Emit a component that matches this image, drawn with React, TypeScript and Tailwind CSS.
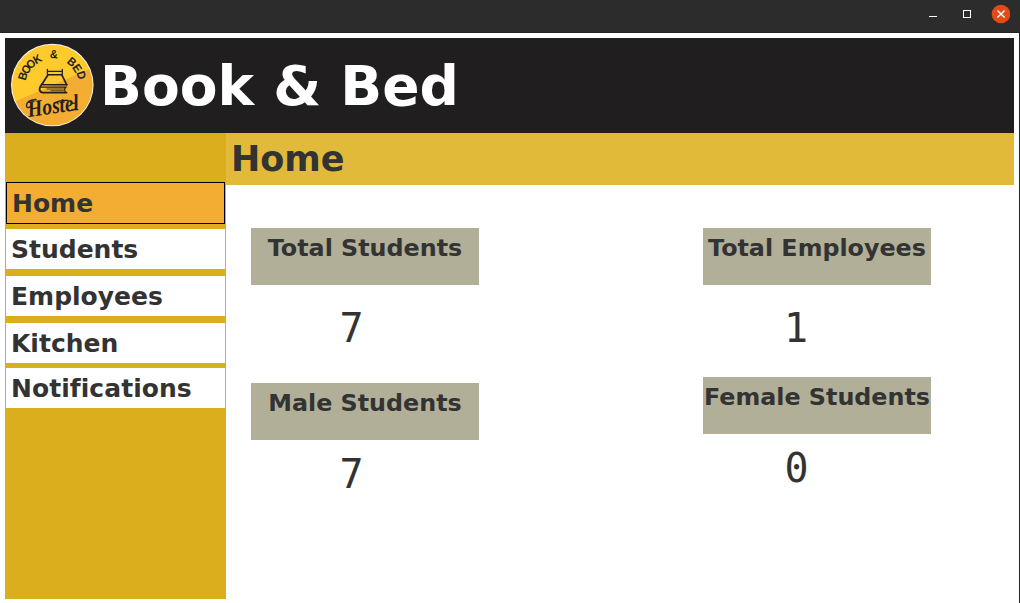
const navItems = [
  { label: "Home", className: "h-[42px] border border-black bg-[#f4ad33] pl-[5px] pt-px mb-[5px]" },
  { label: "Students", className: "h-10 bg-white pl-[5px] pt-px mb-[7px]" },
  { label: "Employees", className: "h-10 bg-white pl-[5px] pt-px mb-[7px]" },
  { label: "Kitchen", className: "h-10 bg-white pl-[5px] pt-px mb-[5px]" },
  { label: "Notifications", className: "h-10 bg-white pl-[5px] pt-px tracking-[0.05px]" },
];

const badgeLetters = [
  { char: "B", x: 12.5, y: 33, angle: -73 },
  { char: "O", x: 16, y: 26.3, angle: -59 },
  { char: "O", x: 20.8, y: 20.7, angle: -45 },
  { char: "K", x: 27.2, y: 16, angle: -30 },
  { char: "&", x: 44, y: 11, angle: 3 },
  { char: "B", x: 62, y: 18.7, angle: 40 },
  { char: "E", x: 67.3, y: 25.2, angle: 56 },
  { char: "D", x: 71.6, y: 32.2, angle: 71 },
];

function Logo() {
  return (
    <svg width="84" height="84" viewBox="0 0 84 84" className="shrink-0" aria-label="Book & Bed Hostel">
      <defs>
        <clipPath id="disc">
          <circle cx="42.3" cy="42" r="40.2" />
        </clipPath>
      </defs>
      <circle cx="42.3" cy="42" r="41.3" fill="#f7f2e6" />
      <g clipPath="url(#disc)">
        <rect width="84" height="84" fill="#ffca2b" />
        <path d="M0 61 L84 24 V84 H0 Z" fill="#f4ad33" />
      </g>
      <g fill="#231f20" fontFamily="Liberation Sans" fontWeight="bold" fontSize="11.8" textAnchor="middle">
        {badgeLetters.map((l, i) => (
          <text key={i} transform={`translate(${l.x} ${l.y}) rotate(${l.angle}) scale(.92 1)`} y="4.2">
            {l.char}
          </text>
        ))}
      </g>
      <g stroke="#231f20" fill="none" strokeLinejoin="round" strokeLinecap="round">
        <path d="M37.4 26.5 V31 M52.3 26.5 V31 M37.4 28.3 H52.3" strokeWidth="1.3" />
        <path d="M38 31.7 L32 41.3 M51.7 31.7 L56.8 41.8" strokeWidth="1.7" />
        <path d="M38 31.7 H51.7 M56.8 41.8 H33" strokeWidth="1.6" />
        <path d="M32 41 Q28.6 45.5 30 48 Q30.8 49.6 33 49.6 H56.5" strokeWidth="1.9" />
        <path d="M31 44.2 H56.2 M55.5 44.2 Q53.8 46.5 55.5 49.4" strokeWidth="1.2" />
        <path d="M37 46 H53.5 M41 47.8 H53.5" strokeWidth=".8" />
      </g>
      <g fill="#231f20" fontFamily="Liberation Serif" fontWeight="bold" fontStyle="italic">
        <text transform="translate(18.5 74) rotate(-8) scale(.84 1)" fontSize="23">
          Hostel
        </text>
      </g>
      <g fill="none" stroke="#231f20" strokeLinecap="round">
        <path d="M26 56.5 Q16 57.5 16.5 63 Q17.3 66 20.5 63.5" strokeWidth="1.3" />
        <path d="M44 60 Q50 56.5 58 57.5" strokeWidth="1.3" />
        <path d="M62.5 60.5 Q67.5 59 66.5 63.5 Q65 67.5 61.5 67.2" strokeWidth="1.3" />
      </g>
    </svg>
  );
}

function StatTitle({ children, className }: { children: string; className: string }) {
  return (
    <div className={`flex h-[57px] w-[228px] justify-center bg-[#b1af97] pt-[6px] text-[23.8px] leading-7 font-bold whitespace-nowrap ${className}`}>
      {children}
    </div>
  );
}

function StatValue({ children, className }: { children: number; className: string }) {
  return <div className={`font-['DejaVu_Sans_Mono',monospace] text-[40px] leading-[46px] ${className}`}>{children}</div>;
}

export default function App() {
  return (
    <div className="flex h-[603px] w-[1020px] flex-col overflow-hidden bg-white font-['DejaVu_Sans',sans-serif] text-[#333333] [font-variant-ligatures:none]">
      <div className="flex h-[33px] shrink-0 items-start justify-end border-b border-[#222222] bg-[#2c2c2c] pr-[10px]">
        <svg width="86" height="28" viewBox="0 0 86 28">
          <path d="M5 16.5 H13" stroke="#fff" />
          <rect x="39.5" y="10.5" width="7" height="7" fill="none" stroke="#fff" />
          <circle cx="77" cy="14" r="9.3" fill="#e24a18" />
          <path d="M73.4 10.4 L80.6 17.6 M80.6 10.4 L73.4 17.6" stroke="#fff" strokeWidth="1.4" />
        </svg>
      </div>
      <div className="flex min-h-0 grow flex-col border-r border-[#222222] pt-[5px] pr-[5px] pb-1 pl-[5px]">
        <header className="flex h-[95px] shrink-0 items-start bg-[#211e1f] pt-[5px] pl-[5px]">
          <Logo />
          <h1 className="mt-[11px] ml-[6px] text-[55px] leading-[64px] font-bold whitespace-nowrap text-white">Book &amp; Bed</h1>
        </header>
        <div className="flex min-h-0 grow">
          <nav className="flex w-[221px] shrink-0 flex-col bg-[#dbae1e] px-px pt-[49px]">
            {navItems.map((item) => (
              <div key={item.label} className={`flex shrink-0 items-center text-[25px] font-bold ${item.className}`}>
                {item.label}
              </div>
            ))}
          </nav>
          <main className="flex grow flex-col">
            <div className="flex h-[52px] shrink-0 items-center bg-[#e1ba39] pl-[5px] text-[35px] font-bold">Home</div>
            <div className="flex pt-[43px] pl-[25px]">
              <section className="mr-[224px] w-[228px]">
                <StatTitle className="">Total Students</StatTitle>
                <StatValue className="mt-5 pl-[88.5px]">{7}</StatValue>
                <StatTitle className="mt-8">Male Students</StatTitle>
                <StatValue className="mt-[11px] pl-[88.5px]">{7}</StatValue>
              </section>
              <section className="w-[228px]">
                <StatTitle className="">Total Employees</StatTitle>
                <StatValue className="mt-5 pl-[81px]">{1}</StatValue>
                <StatTitle className="mt-[26px]">Female Students</StatTitle>
                <StatValue className="mt-[11px] pl-[81.5px]">{0}</StatValue>
              </section>
            </div>
          </main>
        </div>
      </div>
    </div>
  );
}
